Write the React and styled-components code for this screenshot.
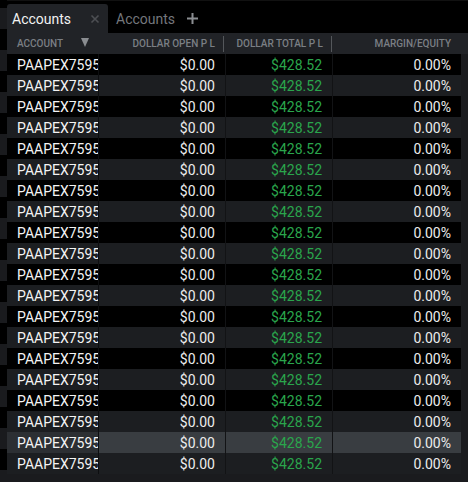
import React from 'react';
import styled, { createGlobalStyle } from 'styled-components';

const GlobalStyle = createGlobalStyle`
  html, body {
    margin: 0;
    padding: 0;
    background: #000;
  }
  * {
    box-sizing: border-box;
  }
`;

const Frame = styled.div`
  width: 468px;
  height: 482px;
  display: grid;
  grid-template-columns: 7px 1fr;
  background: #1a1b1e;
  font-family: Roboto, 'Liberation Sans', sans-serif;
  overflow: hidden;
`;

const Gutter = styled.div`
  background: repeating-linear-gradient(
    to bottom,
    #000 0px,
    #000 8px,
    #1a1b1e 8px,
    #1a1b1e 29px,
    #000 29px,
    #000 42px
  );
`;

const Main = styled.div`
  display: flex;
  flex-direction: column;
  min-width: 0;
  background: #1a1b1e;
`;

const TabBar = styled.div`
  height: 33px;
  padding-top: 3px;
  display: flex;
  align-items: stretch;
  background: #000;
  border-top: 1px solid #111;
`;

const Tab = styled.div`
  display: flex;
  align-items: center;
  width: ${({ active }) => (active ? '101px' : 'auto')};
  padding: 0 ${({ active }) => (active ? '8px 0 5px' : '0 0 8px')};
  background: ${({ active }) => (active ? '#212327' : 'transparent')};
  border-top-left-radius: 3px;
  border-top-right-radius: 3px;
  color: ${({ active }) => (active ? '#f2f2f2' : '#74777c')};
  font-size: 14px;

  .label {
    flex: 1;
  }
`;

const TabIcon = styled.svg`
  display: block;
  flex: none;
  margin-left: ${({ gap }) => gap || 0}px;
`;

const Header = styled.div`
  height: 21px;
  display: grid;
  grid-template-columns: 92px 126px 108px 128px;
  background: #212327;
  padding-right: 7px;
`;

const HeadCell = styled.div`
  position: relative;
  display: flex;
  align-items: center;
  justify-content: ${({ left }) => (left ? 'flex-start' : 'flex-end')};
  padding: ${({ left }) => (left ? '0 0 0 10px' : '0 10px 0 0')};
  font-size: 10px;
  font-weight: 500;
  color: #7b7f84;
  text-transform: uppercase;
  white-space: nowrap;

  &::after {
    content: '';
    display: ${({ divider }) => (divider ? 'block' : 'none')};
    position: absolute;
    right: 1px;
    top: 3px;
    bottom: 2px;
    width: 1px;
    background: #54575b;
  }
`;

const SortArrow = styled.span`
  margin-left: 18px;
  width: 0;
  height: 0;
  border-left: 4.5px solid transparent;
  border-right: 4.5px solid transparent;
  border-top: 9px solid #8a8d91;
  margin-top: -2px;
`;

const Body = styled.div`
  display: flex;
  flex-direction: column;
  padding-right: 7px;
`;

const Row = styled.div`
  height: 21px;
  display: grid;
  grid-template-columns: 92px 127px 107px 128px;
  background: ${({ tone }) =>
    tone === 'hover' ? '#393d41' : tone === 'odd' ? '#1c1e21' : '#000'};
  font-size: 14px;
  line-height: 22px;
`;

const Cell = styled.div`
  overflow: hidden;
  white-space: nowrap;
  text-align: right;
  padding-right: 10px;
  color: ${({ positive }) => (positive ? '#2aa54c' : '#ececec')};
  border-right: 1px solid #121315;

  &:last-child {
    border-right: none;
  }
`;

const AccountCell = styled(Cell)`
  text-align: left;
  text-overflow: clip;
  padding: 0 0 0 10px;
  color: #f4f4f4;
  background: ${({ hover }) => (hover ? '#2c2f33' : 'transparent')};
  border-right: 1px solid #0d0e10;
`;

const rows = Array.from({ length: 20 }, (_, i) => ({
  id: i,
  account: 'PAAPEX7595',
  open: '$0.00',
  total: '$428.52',
  margin: '0.00%',
}));

const App = () => (
  <>
    <GlobalStyle />
    <Frame>
      <Gutter />
      <Main>
        <TabBar>
          <Tab active>
            <span className="label">Accounts</span>
            <TabIcon width="10" height="10" viewBox="0 0 10 10">
              <path d="M1.5 1.5 L8.5 8.5 M8.5 1.5 L1.5 8.5" stroke="#4d4f53" strokeWidth="1.6" />
            </TabIcon>
          </Tab>
          <Tab>
            <span className="label">Accounts</span>
            <TabIcon width="13" height="13" viewBox="0 0 13 13" gap={11}>
              <path d="M6.5 1 V12 M1 6.5 H12" stroke="#8b8e92" strokeWidth="2" />
            </TabIcon>
          </Tab>
        </TabBar>
        <Header>
          <HeadCell left>
            Account
            <SortArrow />
          </HeadCell>
          <HeadCell divider>Dollar Open P L</HeadCell>
          <HeadCell divider>Dollar Total P L</HeadCell>
          <HeadCell>Margin/Equity</HeadCell>
        </Header>
        <Body>
          {rows.map((r) => {
            const tone = r.id === 18 ? 'hover' : r.id % 2 ? 'odd' : 'even';
            return (
              <Row key={r.id} tone={tone}>
                <AccountCell hover={tone === 'hover'}>{r.account}</AccountCell>
                <Cell>{r.open}</Cell>
                <Cell positive>{r.total}</Cell>
                <Cell>{r.margin}</Cell>
              </Row>
            );
          })}
        </Body>
      </Main>
    </Frame>
  </>
);

export default App;
